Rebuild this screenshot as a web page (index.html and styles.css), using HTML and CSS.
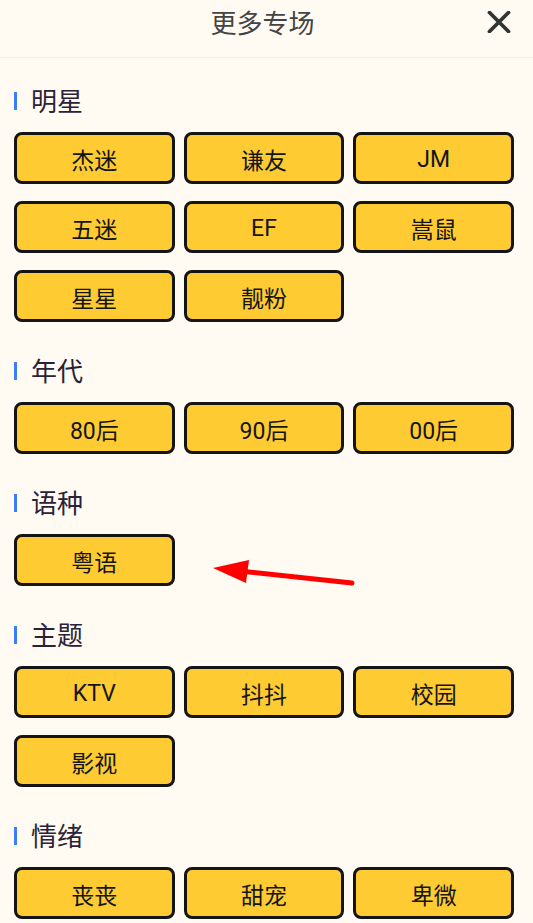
FILE: index.html
```html
<!DOCTYPE html>
<html lang="zh-CN">
<head>
<meta charset="utf-8">
<title>更多专场</title>
<link rel="stylesheet" href="styles.css">
</head>
<body>
<div class="page">
  <header class="header">
    <h1 class="header-title">更多专场</h1>
    <button class="close" aria-label="关闭">
      <svg width="24" height="22" viewBox="0 0 24 22"><path d="M2.5 1.5 L21.5 20.5 M21.5 1.5 L2.5 20.5" stroke="#333" stroke-width="3.8" stroke-linecap="round" fill="none"/></svg>
    </button>
  </header>
  <main class="content">
    <section class="section">
      <h2 class="section-title">明星</h2>
      <div class="grid">
        <div class="tag">杰迷</div><div class="tag">谦友</div><div class="tag">JM</div>
        <div class="tag">五迷</div><div class="tag">EF</div><div class="tag">嵩鼠</div>
        <div class="tag">星星</div><div class="tag">靓粉</div>
      </div>
    </section>
    <section class="section">
      <h2 class="section-title">年代</h2>
      <div class="grid">
        <div class="tag">80后</div><div class="tag">90后</div><div class="tag">00后</div>
      </div>
    </section>
    <section class="section">
      <h2 class="section-title">语种</h2>
      <div class="grid">
        <div class="tag">粤语</div>
      </div>
    </section>
    <section class="section">
      <h2 class="section-title">主题</h2>
      <div class="grid">
        <div class="tag">KTV</div><div class="tag">抖抖</div><div class="tag">校园</div>
        <div class="tag">影视</div>
      </div>
    </section>
    <section class="section">
      <h2 class="section-title">情绪</h2>
      <div class="grid">
        <div class="tag">丧丧</div><div class="tag">甜宠</div><div class="tag">卑微</div>
      </div>
    </section>
  </main>
  <svg class="arrow" width="533" height="923" viewBox="0 0 533 923">
    <line x1="352" y1="583" x2="240" y2="571" stroke="#ff0000" stroke-width="5" stroke-linecap="round"/>
    <polygon points="213,568 249,560 246,583" fill="#ff0000"/>
  </svg>
</div>
</body>
</html>
```
FILE: styles.css
```css
html, body {
  margin: 0;
  padding: 0;
  background: #fffaf2;
}
body {
  font-family: Roboto, "Noto Sans CJK SC", sans-serif;
  width: 533px;
  height: 923px;
  overflow: hidden;
}
.page {
  position: relative;
  width: 533px;
  height: 923px;
}
.header {
  position: relative;
  height: 57px;
  border-bottom: 1px solid #efebe4;
  display: flex;
  justify-content: center;
  align-items: flex-start;
}
.header-title {
  margin: 0;
  padding: 2px 8px 0 0;
  font-size: 26px;
  font-weight: 400;
  line-height: 45px;
  color: #444;
}
.close {
  position: absolute;
  right: 22px;
  top: 11px;
  width: 24px;
  height: 22px;
  padding: 0;
  border: 0;
  background: none;
  display: block;
}
.close svg { display: block; }
.content {
  padding: 25px 19px 0 14px;
  display: flex;
  flex-direction: column;
  gap: 31px;
}
.section-title {
  margin: 0;
  height: 34px;
  padding-top: 2px;
  line-height: 34px;
  display: flex;
  align-items: center;
  font-size: 26px;
  font-weight: 400;
  color: #2a2238;
}
.section-title::before {
  content: "";
  width: 3px;
  height: 18px;
  background: #3d7bff;
  margin-top: -2px;
  margin-right: 14px;
}
.grid {
  margin-top: 13px;
  display: grid;
  grid-template-columns: repeat(3, 1fr);
  column-gap: 9px;
  row-gap: 17px;
}
.tag {
  box-sizing: border-box;
  height: 52px;
  padding-top: 2px;
  border: 3px solid #141414;
  border-radius: 8px;
  background: #fecb33;
  display: flex;
  align-items: center;
  justify-content: center;
  font-size: 23px;
  color: #151515;
}
.arrow {
  position: absolute;
  left: 0;
  top: 0;
  pointer-events: none;
}
```
